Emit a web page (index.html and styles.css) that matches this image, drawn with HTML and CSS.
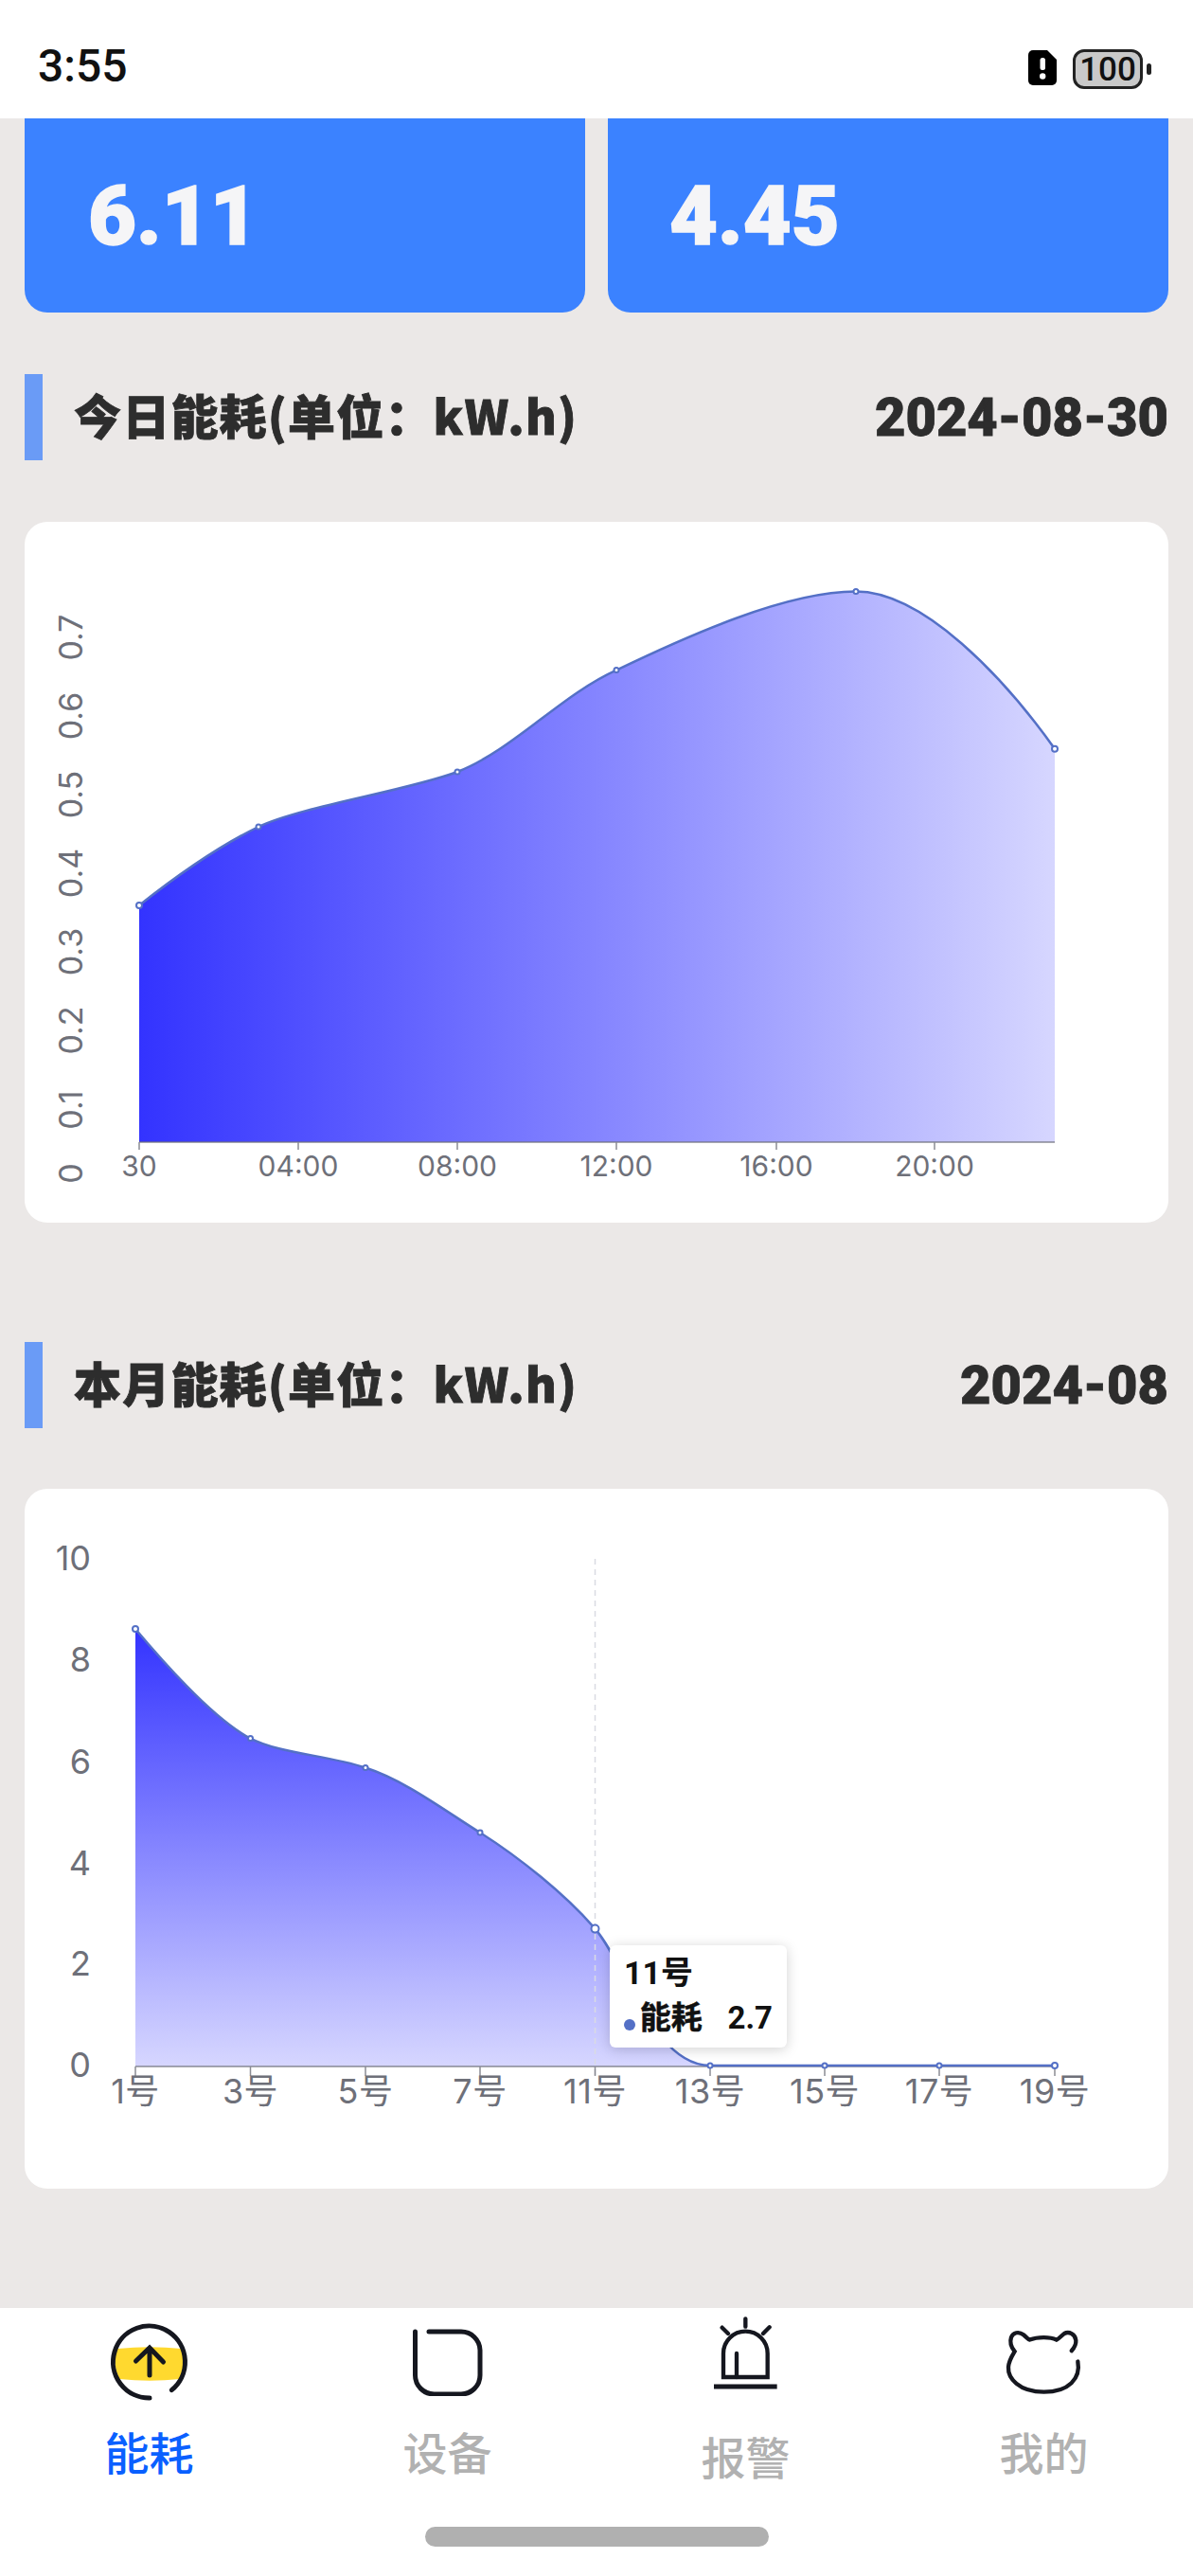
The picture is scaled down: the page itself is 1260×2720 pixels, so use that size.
FILE: index.html
```html
<!DOCTYPE html>
<html lang="zh-CN">
<head>
<meta charset="utf-8">
<title>能耗</title>
<link rel="stylesheet" href="styles.css">
</head>
<body>
<div class="app">
  <header class="status">
    <span class="time">3:55</span>
    <div class="status-icons">
      <svg class="alert-doc" viewBox="0 0 30 37" width="30" height="37"><path class="doc-body" d="M5 0H20L30 10V32A5 5 0 0 1 25 37H5A5 5 0 0 1 0 32V5A5 5 0 0 1 5 0Z"/><rect class="doc-mark" x="12.5" y="8" width="5.5" height="13" rx="2.5"/><circle class="doc-mark" cx="15.2" cy="27.5" r="3.2"/></svg>
      <div class="battery"><span>100</span></div>
    </div>
  </header>

  <main class="content">
    <section class="stats">
      <div class="stat">6.11</div>
      <div class="stat stat-right">4.45</div>
    </section>

    <div class="section-head">
      <i class="section-bar"></i>
      <h2 class="section-title">今日能耗(单位：kW.h)</h2>
      <span class="section-date">2024-08-30</span>
    </div>
    <div class="card card-day">
      <svg class="chart" viewBox="26 551 1208 740" width="1208" height="740">
        <defs>
          <linearGradient id="dayFill" x1="0" y1="0" x2="1" y2="0">
            <stop offset="0" stop-color="#3333ff"/>
            <stop offset="1" stop-color="#3333ff" stop-opacity="0.2"/>
          </linearGradient>
        </defs>
        <path fill="url(#dayFill)" d="M147 956C190 922 232 893 273 873C320 851 430 835 483 815C540 793 594 733 651 707.6C725 672 830 624.6 904 624.6C975 624.6 1060 715 1114 790.7L1114 1206L147 1206Z"/>
        <path class="axis" d="M147 1206H1114M147 1206V1214M315 1206V1214M483 1206V1214M651 1206V1214M820 1206V1214M987 1206V1214"/>
        <path class="curve" d="M147 956C190 922 232 893 273 873C320 851 430 835 483 815C540 793 594 733 651 707.6C725 672 830 624.6 904 624.6C975 624.6 1060 715 1114 790.7"/>
        <circle class="dot" cx="147" cy="956" r="3"/><circle class="dot" cx="273" cy="873" r="2.5"/><circle class="dot" cx="483" cy="815" r="2.5"/><circle class="dot" cx="651" cy="707.6" r="2.5"/><circle class="dot" cx="904" cy="624.6" r="2.5"/><circle class="dot" cx="1114" cy="790.7" r="3"/>
        <g class="labels-x">
          <text x="147" y="1242">30</text><text x="315" y="1242">04:00</text><text x="483" y="1242">08:00</text><text x="651" y="1242">12:00</text><text x="820" y="1242">16:00</text><text x="987" y="1242">20:00</text>
        </g>
        <g class="labels-y">
          <text transform="translate(87 1239) rotate(-90)">0</text>
          <text transform="translate(87 1172) rotate(-90)">0.1</text>
          <text transform="translate(87 1088) rotate(-90)">0.2</text>
          <text transform="translate(87 1005) rotate(-90)">0.3</text>
          <text transform="translate(87 922) rotate(-90)">0.4</text>
          <text transform="translate(87 839) rotate(-90)">0.5</text>
          <text transform="translate(87 756) rotate(-90)">0.6</text>
          <text transform="translate(87 673) rotate(-90)">0.7</text>
        </g>
      </svg>
    </div>

    <div class="section-head section-head-month">
      <i class="section-bar"></i>
      <h2 class="section-title">本月能耗(单位：kW.h)</h2>
      <span class="section-date">2024-08</span>
    </div>
    <div class="card card-month">
      <svg class="chart" viewBox="26 1572 1208 739" width="1208" height="739">
        <defs>
          <linearGradient id="monthFill" x1="0" y1="0" x2="0" y2="1">
            <stop offset="0" stop-color="#3333ff"/>
            <stop offset="1" stop-color="#3333ff" stop-opacity="0.2"/>
          </linearGradient>
        </defs>
        <path fill="url(#monthFill)" d="M143 1720C175 1758 225 1815 264.500 1835.600C295 1851.500 345 1853 386 1866.500C428 1880 470 1912 507 1935C548 1961 597 2000 628.500 2036.600C660 2072 690 2181 750 2181L750 2182L143 2182Z"/>
        <path class="guide" d="M628.500 1646V2192"/>
        <path class="axis" d="M143 2182H1114M143 2182V2192M264.500 2182V2192M386 2182V2192M507 2182V2192M628.500 2182V2192M750 2182V2192M871 2182V2192M992 2182V2192M1114 2182V2192"/>
        <path class="curve" d="M143 1720C175 1758 225 1815 264.500 1835.600C295 1851.500 345 1853 386 1866.500C428 1880 470 1912 507 1935C548 1961 597 2000 628.500 2036.600C660 2072 690 2181 750 2181H1114"/>
        <circle class="dot" cx="143" cy="1720" r="3"/><circle class="dot" cx="264.500" cy="1835.600" r="2.500"/><circle class="dot" cx="386" cy="1866.500" r="2.500"/><circle class="dot" cx="507" cy="1935" r="2.500"/><circle class="dot" cx="628.500" cy="2036.600" r="4"/><circle class="dot" cx="750" cy="2181" r="2.500"/><circle class="dot" cx="871" cy="2181" r="2.500"/><circle class="dot" cx="992" cy="2181" r="2.500"/><circle class="dot" cx="1114" cy="2181" r="3"/>
        <g class="labels-x labels-x-month">
          <text x="143" y="2221">1号</text><text x="264.500" y="2221">3号</text><text x="386" y="2221">5号</text><text x="507" y="2221">7号</text><text x="628.500" y="2221">11号</text><text x="750" y="2221">13号</text><text x="871" y="2221">15号</text><text x="992" y="2221">17号</text><text x="1114" y="2221">19号</text>
        </g>
        <g class="labels-value">
          <text x="96" y="1658">10</text><text x="96" y="1765">8</text><text x="96" y="1873">6</text><text x="96" y="1980">4</text><text x="96" y="2086">2</text><text x="96" y="2193">0</text>
        </g>
      </svg>
      <div class="tooltip">
        <div class="tooltip-title">11号</div>
        <div class="tooltip-row"><i class="tooltip-dot"></i><span class="tooltip-name">能耗</span><span class="tooltip-value">2.7</span></div>
      </div>
    </div>
  </main>

  <nav class="tabs">
    <div class="tab tab-active">
      <div class="tab-icon">
        <svg viewBox="0 0 96 96" width="96" height="96">
          <path class="icon-band" d="M14 34Q48 30.500 82 34Q88 50 80 66Q48 69.500 16 66Q8 50 14 34Z"/>
          <path class="icon-line" d="M71.300 77.600A38 38 0 1 0 48 86"/>
          <path class="icon-line" d="M48 62V34M33.500 47L48 33L62.500 48"/>
        </svg>
      </div>
      <span class="tab-label">能耗</span>
    </div>
    <div class="tab">
      <div class="tab-icon">
        <svg viewBox="0 0 74 71" width="74" height="71">
          <path class="icon-line" d="M2.500 3V49A20 20 0 0 0 22.500 69H51A20 20 0 0 0 71 49V22.500A20 20 0 0 0 51 3H17"/>
        </svg>
      </div>
      <span class="tab-label">设备</span>
    </div>
    <div class="tab">
      <div class="tab-icon">
        <svg class="icon-alarm" viewBox="150 40 225 240" width="75" height="80">
          <path class="icon-fine" d="M192 235V160A70 70 0 0 1 332 160V235Z"/>
          <path class="icon-fine" d="M234 160V235M262 50V75M188 78L207 97M338 77L318 97"/>
          <path class="icon-base" d="M162 265H362"/>
        </svg>
      </div>
      <span class="tab-label tab-label-low">报警</span>
    </div>
    <div class="tab">
      <div class="tab-icon">
        <svg viewBox="1080 80 260 220" width="87" height="73">
          <path class="icon-fine" d="M1318 187C1328 240 1290 284 1210 284C1130 284 1095 240 1097 205C1098 185 1108 170 1117 155C1105 140 1100 128 1106 110C1112 95 1130 90 1145 102C1155 110 1160 117 1165 118C1190 108 1230 108 1250 118C1258 115 1265 105 1275 98C1290 90 1310 100 1312 120C1313 135 1305 145 1298 153"/>
        </svg>
      </div>
      <span class="tab-label">我的</span>
    </div>
    <div class="home-indicator"></div>
  </nav>
</div>
</body>
</html>
```

FILE: styles.css
```css
* { box-sizing: border-box; }
html, body { margin: 0; padding: 0; }
body { background: #ebe8e7; font-family: Roboto, "Noto Sans CJK SC", sans-serif; }
.app { width: 1260px; height: 2720px; display: flex; flex-direction: column; overflow: hidden; }

.status { height: 125px; flex: none; background: #fff; display: flex; justify-content: space-between; padding: 45px 53px 0 40px; }
.time { font: 500 48px/1 Roboto, sans-serif; color: #111; height: 48px; line-height: 50px; }
.status-icons { display: flex; align-items: flex-start; gap: 17px; margin-top: 7px; }
.alert-doc { display: block; margin-top: 1px; }
.doc-body { fill: #000; }
.doc-mark { fill: #fff; }
.battery { position: relative; width: 74px; height: 42px; border: 3px solid #222; border-radius: 12px; background: #c9c9c9; display: flex; align-items: center; justify-content: center; font: 500 35px/1 Roboto, sans-serif; color: #111; }
.battery::after { content: ""; position: absolute; right: -12px; top: 12px; width: 5px; height: 12px; border-radius: 3px; background: #222; }

.content { flex: 1; padding: 0 26px; }
.stats { display: grid; grid-template-columns: 592px 592px; gap: 24px; }
.stat { height: 205px; background: #3b82ff; border-radius: 0 0 24px 24px; color: #f5f5f7; font: 900 88px/1 Roboto, sans-serif; padding: 59px 0 0 67px; -webkit-text-stroke: 1.5px #f5f5f7; }
.stat-right { padding-left: 65px; }

.section-head { margin-top: 65px; height: 91px; display: flex; align-items: center; }
.section-head-month { margin-top: 126px; }
.section-bar { display: block; width: 19px; height: 91px; background: #6a9bf6; }
.section-title { margin: 0 0 8px 33px; flex: 1; font: 900 50px/1.2 "Noto Sans CJK SC", sans-serif; color: #2d2d2d; letter-spacing: 1.2px; -webkit-text-stroke: .8px #2d2d2d; }
.section-date { font: 900 56px/1 Roboto, sans-serif; color: #2d2d2d; -webkit-text-stroke: .8px #2d2d2d; }

.card { position: relative; margin-top: 65px; background: #fff; border-radius: 24px; overflow: hidden; }
.card-day { height: 740px; }
.card-month { height: 739px; margin-top: 64px; }
.chart { display: block; }
.axis { fill: none; stroke: #6e7079; stroke-width: 1.5; opacity: .8; }
.curve { fill: none; stroke: #5470c6; stroke-width: 2.5; }
.guide { fill: none; stroke: #d9dbe2; stroke-width: 1.5; stroke-dasharray: 6 5; }
.dot { fill: #fff; stroke: #5470c6; stroke-width: 2; }
.labels-x text { font: 400 30px Inter, "Noto Sans CJK SC", sans-serif; fill: #6e7079; text-anchor: middle; }
.labels-x-month text { font-size: 36px; letter-spacing: .5px; }
.labels-y text { font: 400 34px Inter, sans-serif; fill: #6e7079; text-anchor: middle; }
.labels-value text { font: 400 36px Inter, sans-serif; fill: #6e7079; text-anchor: end; }

.tooltip { position: absolute; left: 618px; top: 482px; width: 187px; height: 108px; background: #fff; border-radius: 6px; box-shadow: 0 2px 14px rgba(0, 0, 0, .18); padding: 7px 15px; color: #111; font: 700 34px/44px Roboto, "Noto Sans CJK SC", sans-serif; }
.tooltip-title { height: 48px; }
.tooltip-row { display: flex; align-items: center; }
.tooltip-dot { width: 12px; height: 12px; border-radius: 50%; background: #5470c6; margin: 14px 5px 0 0; }
.tooltip-name { font-size: 33px; width: 94px; -webkit-text-stroke: .5px #111; }
.tooltip-value { font-size: 33px; }

.tabs { position: relative; height: 283px; flex: none; background: #fff; display: grid; grid-template-columns: repeat(4, 315px); align-content: start; }
.tab { display: flex; flex-direction: column; align-items: center; }
.tab-icon { height: 112px; margin-top: 1px; display: flex; align-items: center; justify-content: center; }
.icon-alarm { margin-bottom: 18px; }
.tab-label { font: 500 47px/60px "Noto Sans CJK SC", sans-serif; color: #b1b1b1; margin-top: 8px; }
.tab-label-low { margin-top: 13px; }
.tab-active .tab-label { color: #0a60ff; }
.icon-band { fill: #ffd92f; }
.icon-line { fill: none; stroke: #15171f; stroke-width: 5; stroke-linecap: round; }
.icon-fine { fill: none; stroke: #15171f; stroke-width: 13; stroke-linecap: round; }
.icon-base { fill: none; stroke: #15171f; stroke-width: 15; }
.home-indicator { position: absolute; left: 449px; top: 231px; width: 363px; height: 21px; border-radius: 11px; background: #b0b0b0; }
```
